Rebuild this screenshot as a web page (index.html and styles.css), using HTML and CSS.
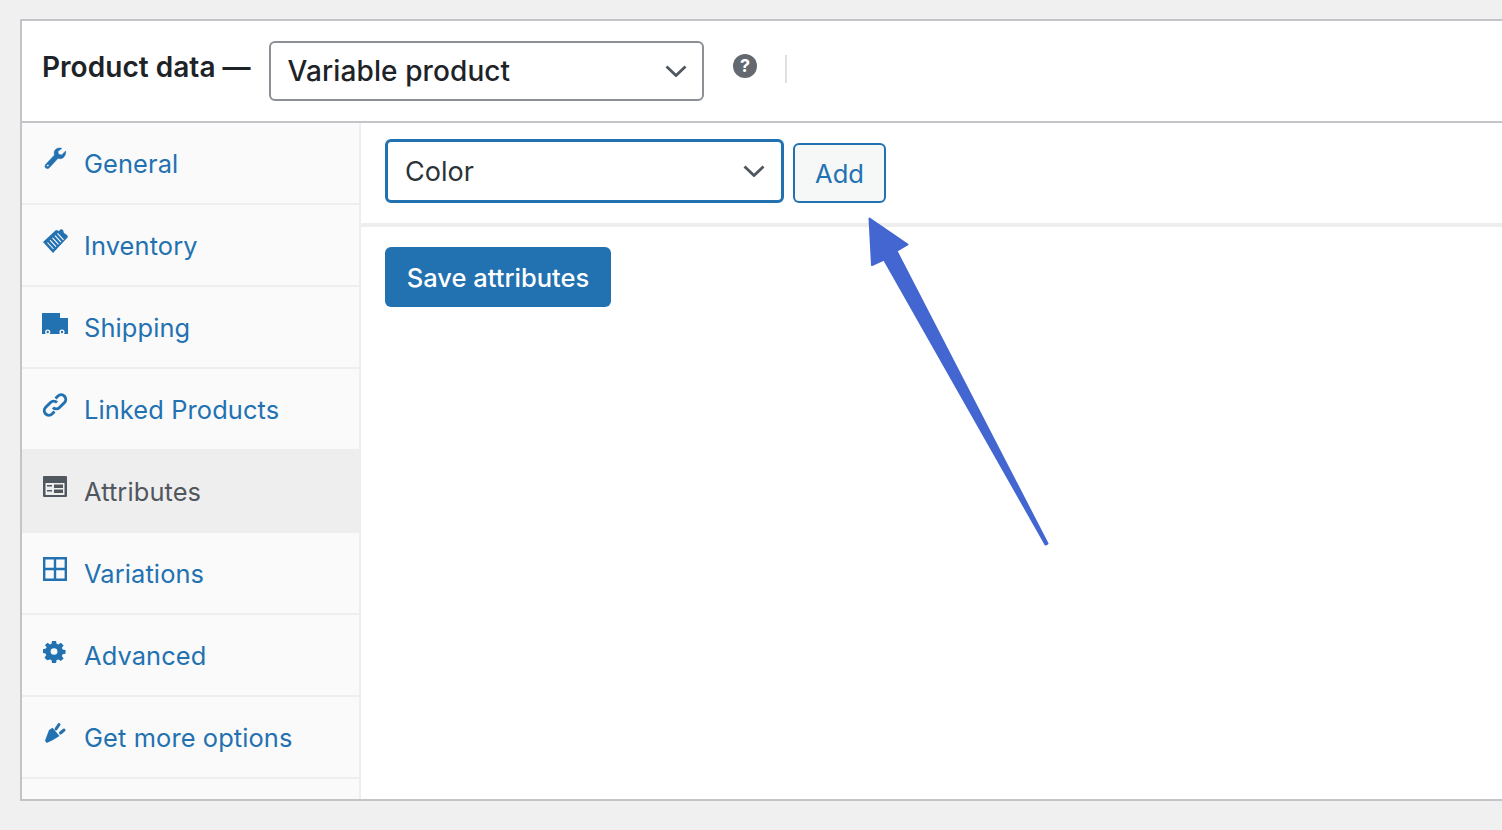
FILE: index.html
```html
<!DOCTYPE html>
<html lang="en">
<head>
<meta charset="utf-8">
<title>Product data</title>
<link rel="stylesheet" href="styles.css">
</head>
<body>
<section class="panel">
  <header class="panel-head">
    <h2 class="panel-title">Product data —</h2>
    <div class="select select-type"><span>Variable product</span>
      <svg class="chev" viewBox="0 0 22 12"><path d="M1.500 1.500 11 10.500l9.500-9"/></svg>
    </div>
    <svg class="help" viewBox="0 0 24 24"><circle cx="12" cy="12" r="12"/><text x="12" y="18" text-anchor="middle" class="help-q">?</text></svg>
    <span class="sep"></span>
  </header>
  <div class="panel-body">
    <nav class="tabs">
      <a class="tab"><svg class="ic" viewBox="0 0 26 24"><path class="thick" transform="translate(3 1) scale(.875)" d="M23.500 3.500 19 8l-3.500-.8L14.700 4 19.200.4c-3-1-6.200-.2-7.700 2-1.200 1.800-1.300 3.800-.6 5.500L.9 18.700c-1.200 1.300-1.200 3.100-.1 4.100 1.100 1.100 2.900 1 4.100-.2l10-10.800c2 .8 4.400.5 6.200-1 2-1.700 2.900-4.500 2.400-7.300zM3.200 21.400a1.300 1.300 0 1 1 0-2.600 1.300 1.300 0 0 1 0 2.600z"/></svg><span>General</span></a>
      <a class="tab"><svg class="ic" viewBox="0 0 26 24"><path d="M1 13 14 1l3 1 2-2 2 1 1 3 3 2 1 2-15 16z"/><path class="slits" d="m5.500 13.500 6 6.500M8 11.200l6 6.500M10.500 8.900l6 6.500M13 6.600l6 6.500M15.500 4.300l6 6.500"/></svg><span>Inventory</span></a>
      <a class="tab"><svg class="ic" viewBox="0 0 26 24"><path d="M0 2h18v5h8v16H0z"/><circle class="wheel" cx="5.700" cy="21" r="2.600"/><circle cx="5.700" cy="21" r="1.200"/><circle class="wheel" cx="20" cy="21" r="2.600"/><circle cx="20" cy="21" r="1.200"/></svg><span>Shipping</span></a>
      <a class="tab"><svg class="ic" viewBox="0 0 26 24"><g class="stroke stroke-link"><path d="M11 14.500a4.500 4.500 0 0 0 6.500 0l5-5a4.600 4.600 0 0 0-6.500-6.500l-2.500 2.500"/><path d="M15 9.500a4.500 4.500 0 0 0-6.500 0l-5 5a4.600 4.600 0 0 0 6.500 6.500l2.500-2.500"/></g></svg><span>Linked Products</span></a>
      <a class="tab tab-active"><svg class="ic" viewBox="0 0 26 24"><path fill-rule="evenodd" d="M2 1h22a1 1 0 0 1 1 1v19a1 1 0 0 1-1 1H2a1 1 0 0 1-1-1V2a1 1 0 0 1 1-1zm1.500 7v12h19V8zM5 10h5v1.500H5zm7-.5h9v3.500h-9zm-7 5.500h5v1.500H5zm7-.5h9V18h-9z"/></svg><span>Attributes</span></a>
      <a class="tab"><svg class="ic" viewBox="0 0 26 24"><g class="stroke"><path d="M2.200 1.200h21.600v21.600H2.200zM13 1.200v21.600M2.200 12h21.600"/></g></svg><span>Variations</span></a>
      <a class="tab"><svg class="ic" viewBox="0 0 26 24"><path transform="translate(1 2) scale(.92 .875)" fill-rule="evenodd" d="M9.800 0h4.400l.6 3.200 1.800.8L19.400 2l3 3-1.900 2.800.8 1.900 3.200.6v4.300l-3.200.6-.8 1.900 1.900 2.800-3 3-2.800-1.900-1.800.8-.6 3.200H9.800l-.6-3.200-1.800-.8L4.600 22l-3-3 1.900-2.800-.8-1.900L0 13.700V9.300l3.200-.6.800-1.900L2 4.900l3-3 2.600 2 1.600-.8zM12 8.300a3.700 3.700 0 1 0 0 7.400 3.700 3.700 0 0 0 0-7.400z"/></svg><span>Advanced</span></a>
      <a class="tab"><svg class="ic" viewBox="0 0 26 24"><path d="M3 19.700 7 9l3.500-2.200 7 8.200-6.500 4-6.300 3z"/><path class="prong" d="m14 8 3-4.500M18.500 12l3.500-3"/></svg><span>Get more options</span></a>
    </nav>
    <main class="content">
      <div class="toolbar">
        <div class="select select-attr"><span>Color</span>
          <svg class="chev" viewBox="0 0 22 12"><path d="M1.500 1.500 11 10.500l9.500-9"/></svg>
        </div>
        <button class="btn-add" type="button">Add</button>
      </div>
      <div class="actions">
        <button class="btn-save" type="button">Save attributes</button>
      </div>
    </main>
  </div>
</section>
<svg class="arrow" viewBox="0 0 1502 830"><path d="M869.500 218.500 907.500 244.500 896.500 251 1047.500 543.500 1045.500 544.500 884 259.500 872 265z"/></svg>
</body>
</html>
```
FILE: styles.css
```css
* { box-sizing: border-box; }
html, body { margin: 0; height: 830px; overflow: hidden; }
body {
  background: #f0f0f1;
  padding: 19px 0 0 20px;
  font-family: Inter, "Liberation Sans", sans-serif;
  position: relative;
}
.panel {
  width: 1500px;
  height: 782px;
  background: #fff;
  border: 2px solid #c3c4c7;
  border-right: 0;
  display: flex;
  flex-direction: column;
}
.panel-head {
  height: 102px;
  flex: none;
  border-bottom: 2px solid #c3c4c7;
  display: flex;
  align-items: flex-start;
  padding: 20px 0 0 20px;
}
.panel-title {
  margin: 10px 0 0;
  font-size: 28px;
  line-height: 32px;
  font-weight: 600;
  letter-spacing: .03px;
  color: #1d2327;
  white-space: nowrap;
}
.select {
  display: flex;
  align-items: center;
  justify-content: space-between;
  background: #fff;
  color: #1d2327;
}
.select-type {
  width: 435px;
  height: 60px;
  margin-left: 18px;
  border: 2px solid #8c8f94;
  border-radius: 6px;
  padding: 0 15px 0 17px;
  font-size: 28px;
  font-weight: 500;
  letter-spacing: .1px;
}
.chev { width: 22px; height: 12px; fill: none; stroke: #50575e; stroke-width: 2.800; }
.help { width: 24px; height: 24px; margin: 13px 0 0 29px; fill: #646970; }
.help-q { fill: #fff; font: 700 18px Inter, "Liberation Sans", sans-serif; }
.sep { width: 2px; height: 28px; margin: 14px 0 0 28px; background: #e0e0e0; }
.panel-body { flex: 1; display: flex; min-height: 0; }
.tabs {
  width: 339px;
  flex: none;
  background: #fafafa;
  border-right: 2px solid #eee;
}
.tab {
  display: flex;
  align-items: center;
  height: 82px;
  padding: 0 0 0 20px;
  border-bottom: 2px solid #eee;
  color: #2271b1;
  font-size: 25.400px;
  letter-spacing: .12px;
}
.tab span { margin-left: 16px; }
.tab-active { background: #eee; color: #50575e; }
.ic { width: 26px; height: 24px; flex: none; fill: #2271b1; margin-top: -8px; }
.tab-active .ic { fill: #50575e; }
.stroke { fill: none; stroke: #2271b1; stroke-width: 2.400; }
.stroke-link { stroke-width: 2.900; }
.thick { stroke: #2271b1; stroke-width: .6; }
.slits { fill: none; stroke: #fafafa; stroke-width: 1.100; }
.wheel { fill: #fafafa; }
.prong { fill: none; stroke: #2271b1; stroke-width: 3; stroke-linecap: round; }
.content { flex: 1; }
.toolbar {
  height: 104px;
  border-bottom: 4px solid #eee;
  display: flex;
  align-items: flex-start;
  padding: 16px 0 0 24px;
}
.select-attr {
  width: 399px;
  height: 64px;
  border: 3px solid #2271b1;
  border-radius: 6px;
  padding: 0 16px 0 17px;
  font-size: 27px;
  color: #2c3338;
}
.btn-add {
  width: 93px;
  height: 60px;
  margin: 4px 0 0 9px;
  background: #f6f7f7;
  border: 2px solid #2271b1;
  border-radius: 6px;
  color: #2271b1;
  font: 400 25.500px Inter, "Liberation Sans", sans-serif;
  padding: 0;
}
.actions { padding: 20px 0 0 24px; }
.btn-save {
  width: 226px;
  height: 60px;
  background: #2271b1;
  border: 0;
  border-radius: 6px;
  color: #fff;
  font: 500 25.500px Inter, "Liberation Sans", sans-serif;
  padding: 0;
}
.arrow {
  position: absolute;
  left: 0;
  top: 0;
  width: 1502px;
  height: 830px;
  fill: #4366d1;
  stroke: #4366d1;
  stroke-width: 2;
  stroke-linejoin: round;
  pointer-events: none;
}
```
